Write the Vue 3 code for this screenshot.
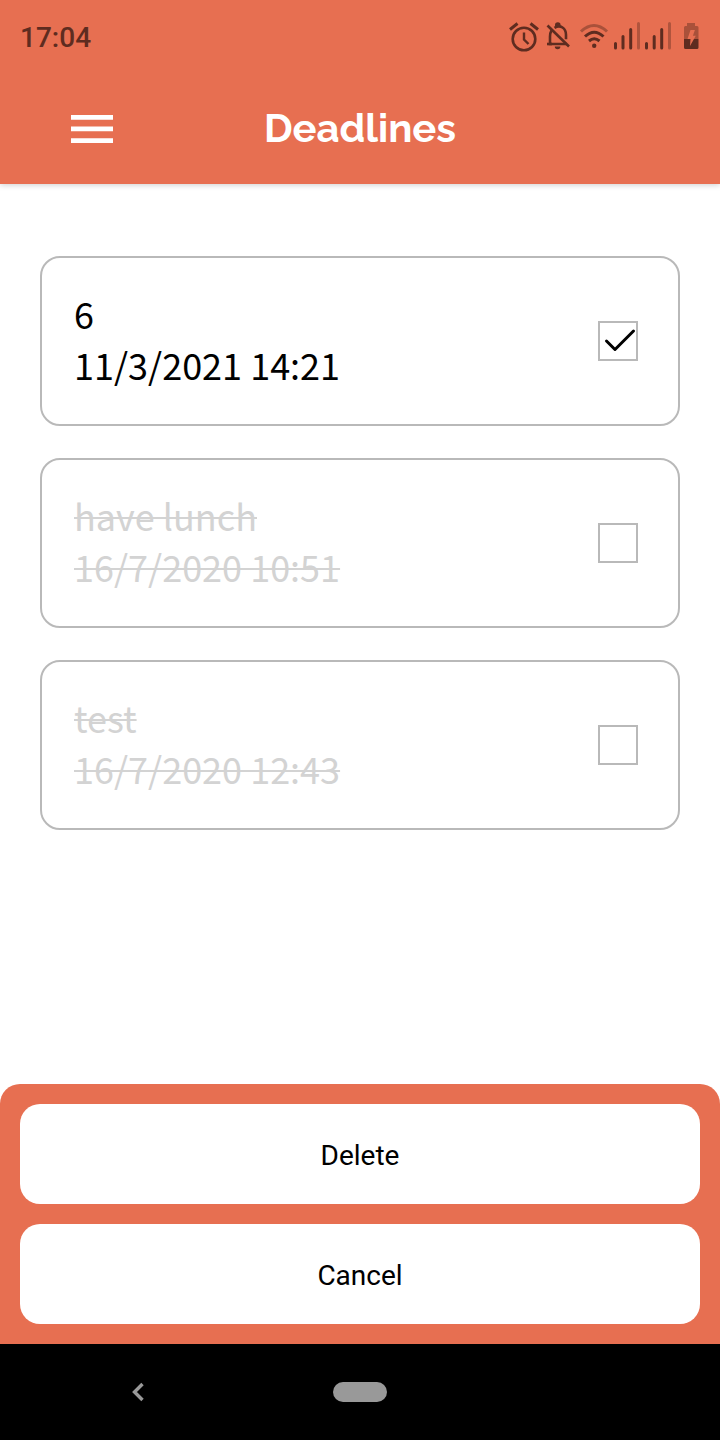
<script setup>
import { ref } from 'vue'

const deadlines = ref([
  { id: 1, title: '6', due: '11/3/2021 14:21', past: false, selected: true },
  { id: 2, title: 'have lunch', due: '16/7/2020 10:51', past: true, selected: false },
  { id: 3, title: 'test', due: '16/7/2020 12:43', past: true, selected: false },
])

function cancel() {
  deadlines.value.forEach((d) => { d.selected = false })
}

function removeSelected() {
  deadlines.value = deadlines.value.filter((d) => !d.selected)
}
</script>

<template>
  <div class="screen">
    <div class="top">
      <div class="status">
        <time class="clock">17:04</time>
        <svg class="status-icons" width="192" height="36" viewBox="0 0 192 36" aria-hidden="true">
          <!-- alarm -->
          <g fill="none" stroke="currentColor" stroke-width="2.6">
            <circle cx="16" cy="21" r="11.3" />
            <path d="M16 14.500v7l4.500 4.500" stroke-width="2.4" />
            <path d="M2 11.500l7.500-6M30 11.500l-7.500-6" stroke-width="3" />
          </g>
          <!-- muted bell -->
          <g fill="none" stroke="currentColor" stroke-width="2.6">
            <path d="M39.500 7.500L61 28.500" />
            <path d="M43.500 12.500c-1.200 2-1.500 4-1.500 6v7.500h17" />
            <path d="M46.500 9.800c6-3.600 11.500.5 11.500 7v4.500" />
            <path d="M39 26h5" />
          </g>
          <path fill="currentColor" d="M47 8.500V7a2.800 2.800 0 0 1 5.600 0v1.500zM46.800 28.500h5.600a2.800 2.800 0 0 1-5.600 0z" />
          <!-- wifi -->
          <g fill="none" stroke="currentColor" stroke-width="3">
            <path d="M73 13.500q13-12 26 0" opacity=".45" />
            <path d="M77 18.500q9.200-8.500 18.500 0" />
            <path d="M81 23q5.200-4.500 10.500 0" />
          </g>
          <circle cx="86.200" cy="27.700" r="2.200" fill="currentColor" />
          <!-- two signal meters -->
          <g fill="none" stroke="currentColor" stroke-width="3" stroke-linecap="round">
            <path d="M107.500 25.500v4.500M115 18.500v11.500M122.700 11.500v18.500M138.500 25.500v4.500M146.200 18.500v11.500M153.700 11.500v18.500" />
            <path d="M130.500 5.500v24.500M161.500 5.500v24.500" opacity=".4" />
          </g>
          <!-- charging battery -->
          <path fill="currentColor" opacity=".45" d="M179 5h8v3h2a1.500 1.500 0 0 1 1.500 1.500V21H176V9.500A1.500 1.500 0 0 1 177.500 8H179z" />
          <path fill="currentColor" d="M176 21h14.500v8.500a1.500 1.500 0 0 1-1.500 1.500h-11.500a1.500 1.500 0 0 1-1.500-1.500z" />
          <path fill="#e76f51" d="M182.500 12h4.400l-2 5.700h2.900L182 28l.5-7h-3z" />
        </svg>
      </div>
      <header class="bar">
        <button class="menu" type="button" aria-label="Open menu">
          <svg width="42" height="28" viewBox="0 0 42 28" aria-hidden="true">
            <path fill="#fff" d="M0 0h42v4.700H0zM0 11.600h42v4.700H0zM0 23.300h42V28H0z" />
          </svg>
        </button>
        <h1>Deadlines</h1>
      </header>
    </div>

    <main>
      <ul class="list">
        <li v-for="d in deadlines" :key="d.id" class="card" :class="{ past: d.past }">
          <label :for="'deadline-' + d.id" class="text">
            <component :is="d.past ? 's' : 'span'" class="line"><span>{{ d.title }}</span></component>
            <component :is="d.past ? 's' : 'span'" class="line"><span>{{ d.due }}</span></component>
          </label>
          <span class="check">
            <input :id="'deadline-' + d.id" v-model="d.selected" type="checkbox" />
            <svg v-if="d.selected" class="tick" width="40" height="40" viewBox="0 0 40 40" aria-hidden="true">
              <path d="M8.500 20l8.500 8.500L35.500 10" fill="none" stroke="#000" stroke-width="3" stroke-linecap="round" stroke-linejoin="round" />
            </svg>
          </span>
        </li>
      </ul>
    </main>

    <div class="actions">
      <button type="button" @click="removeSelected">Delete</button>
      <button type="button" @click="cancel">Cancel</button>
    </div>

    <nav class="system" aria-label="System navigation">
      <button type="button" aria-label="Back">
        <svg width="12" height="20" viewBox="0 0 12 20" aria-hidden="true">
          <path d="M10.500 2L2.500 10l8 8" fill="none" stroke="#999" stroke-width="3.400" />
        </svg>
      </button>
      <button type="button" class="home" aria-label="Home"><span class="pill"></span></button>
    </nav>
  </div>
</template>

<style>
body {
  background: #fff;
}
</style>

<style scoped>
.screen {
  display: flex;
  flex-direction: column;
  min-height: 100vh;
  font-family: Roboto, sans-serif;
  color: #000;
}
button {
  padding: 0;
  border: 0;
  background: none;
  font: inherit;
  color: inherit;
  cursor: pointer;
}
svg {
  display: block;
}
.top {
  background: #e76f51;
  box-shadow: 0 1px 6px rgba(0, 0, 0, 0.2);
}
.status {
  display: flex;
  align-items: center;
  justify-content: space-between;
  height: 72px;
  padding: 0 20px;
  color: #5e2c20;
}
.clock {
  font-size: 28px;
  font-weight: 500;
  line-height: 32px;
  padding-top: 4px;
}
.bar {
  display: grid;
  grid-template-columns: 1fr auto 1fr;
  align-items: center;
  height: 112px;
}
.menu {
  justify-self: start;
  margin-left: 71px;
  padding-top: 2px;
}
h1 {
  margin: 0;
  font-family: Raleway, "Open Sans", sans-serif;
  font-size: 40px;
  font-weight: 700;
  line-height: 48px;
  color: #fff;
}
main {
  flex: 1;
  padding: 72px 40px 32px;
}
.list {
  display: flex;
  flex-direction: column;
  gap: 32px;
  margin: 0;
  padding: 0;
  list-style: none;
}
.card {
  display: flex;
  align-items: center;
  justify-content: space-between;
  padding: 29px 40px 29px 32px;
  border: 2px solid #b9b9b9;
  border-radius: 20px;
}
.text {
  display: flex;
  flex-direction: column;
  padding-bottom: 6px;
  font-family: "Noto Sans CJK JP", sans-serif;
  font-size: 38px;
  line-height: 51px;
}
.line span {
  font-size: 36px;
  line-height: 36px;
}
.past .line {
  color: #d3d3d3;
  text-decoration: line-through;
  text-decoration-thickness: 2px;
}
.check {
  position: relative;
}
.check input {
  display: block;
  appearance: none;
  width: 40px;
  height: 40px;
  margin: 0;
  border: 2px solid #b9b9b9;
  background: #fff;
}
.tick {
  position: absolute;
  inset: 0;
  pointer-events: none;
}
.actions {
  display: flex;
  flex-direction: column;
  gap: 20px;
  padding: 20px;
  border-radius: 20px 20px 0 0;
  background: #e76f51;
}
.actions button {
  height: 100px;
  padding-top: 2px;
  border-radius: 20px;
  background: #fff;
  font-size: 28px;
}
.system {
  display: grid;
  grid-template-columns: 1fr auto 1fr;
  align-items: center;
  height: 96px;
  background: #000;
}
.system button:first-child {
  justify-self: center;
  margin-right: 58px;
}
.pill {
  display: block;
  width: 54px;
  height: 20px;
  border-radius: 10px;
  background: #999;
}
</style>
